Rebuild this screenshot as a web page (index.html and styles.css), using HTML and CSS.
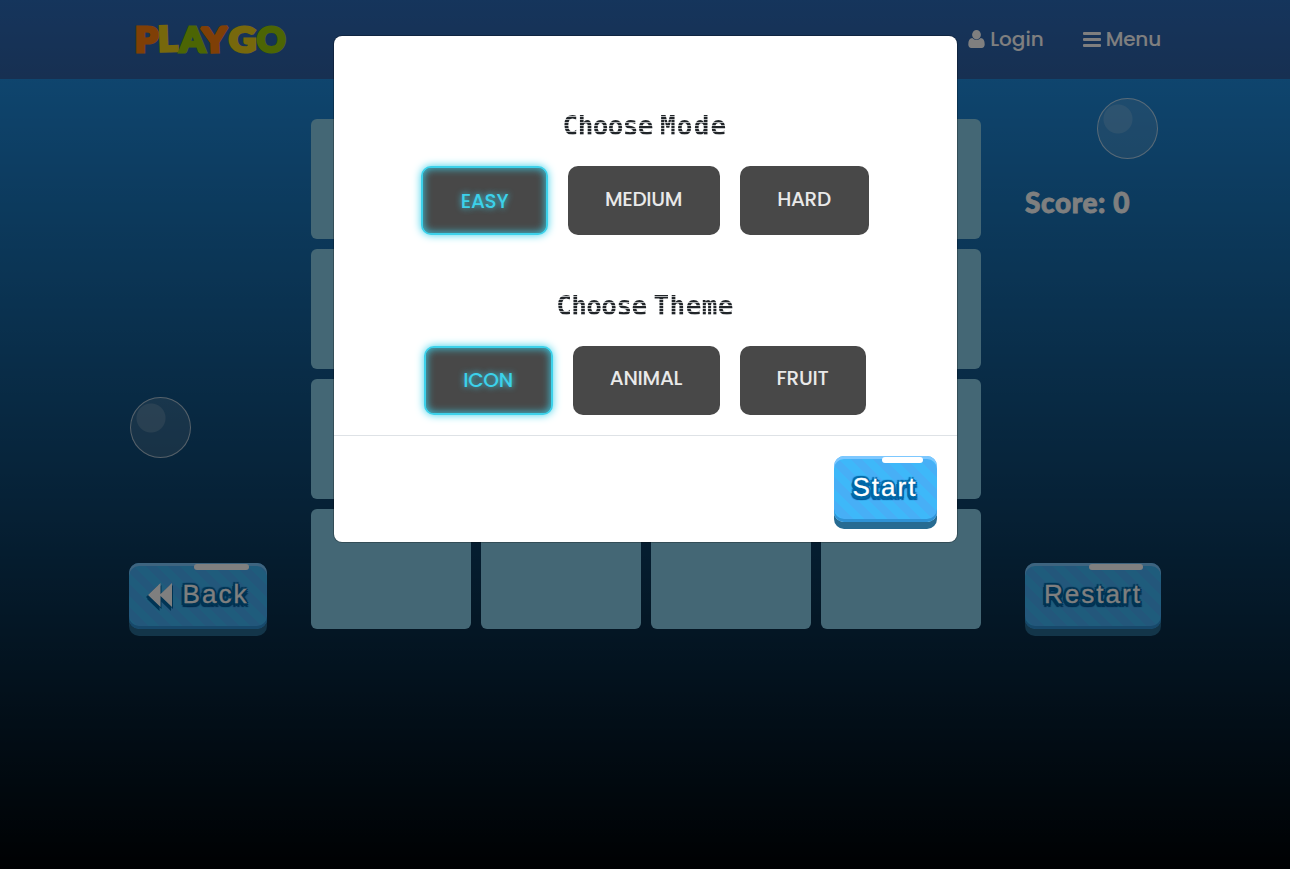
FILE: index.html
```html
<!DOCTYPE html>
<html lang="en">
<head>
<meta charset="utf-8">
<title>PlayGo</title>
<link rel="stylesheet" href="styles.css">
</head>
<body>
<div class="page">
  <header class="header">
    <svg class="logo" width="166" height="66" viewBox="0 -14 166 66" role="img" aria-label="PLAYGO">
      <g class="logo-letters">
        <text class="orange" x="6" y="34" textLength="23" lengthAdjust="spacingAndGlyphs">P</text>
        <text class="yellow" x="29" y="33" textLength="19" lengthAdjust="spacingAndGlyphs" transform="rotate(-2 38 20)">L</text>
        <text class="green" x="51" y="34" textLength="25" lengthAdjust="spacingAndGlyphs">A</text>
        <text class="orange" x="73" y="34" textLength="25" lengthAdjust="spacingAndGlyphs" transform="rotate(-2 85 20)">Y</text>
        <text class="yellow" x="100" y="34" textLength="27" lengthAdjust="spacingAndGlyphs">G</text>
        <text class="green" x="128" y="34" textLength="28.500" lengthAdjust="spacingAndGlyphs">O</text>
      </g>
    </svg>
    <nav class="nav">
      <a class="nav-link login"><svg width="17" height="18" viewBox="0 0 17 18"><ellipse cx="8.5" cy="4.7" rx="4.4" ry="4.7"/><path d="M4.300 8.100C5.400 9.300 6.900 10 8.500 10s3.100-.7 4.200-1.900C15.300 8.300 16.700 10.600 16.700 14.500c0 2-1.200 3.400-3.100 3.400H3.400C1.500 17.900.3 16.500.3 14.500.3 10.600 1.700 8.300 4.300 8.100z"/></svg><span>Login</span></a>
      <a class="nav-link menu"><svg width="18" height="15" viewBox="0 0 18 15"><rect width="18" height="3" rx="1"/><rect y="6" width="18" height="3" rx="1"/><rect y="12" width="18" height="3" rx="1"/></svg><span>Menu</span></a>
    </nav>
  </header>
  <main class="game">
    <aside class="side side-left">
      <button class="btn btn-back"><svg class="rewind" width="25" height="24" viewBox="0 0 25 24"><path d="M0 12 12.500 0V24zM11.500 12 24 0V24z"/></svg><span>Back</span></button>
    </aside>
    <section class="board">
      <div class="card"></div><div class="card"></div><div class="card"></div><div class="card"></div>
      <div class="card"></div><div class="card"></div><div class="card"></div><div class="card"></div>
      <div class="card"></div><div class="card"></div><div class="card"></div><div class="card"></div>
      <div class="card"></div><div class="card"></div><div class="card"></div><div class="card"></div>
    </section>
    <aside class="side side-right">
      <div class="score">Score: 0</div>
      <button class="btn btn-restart"><span>Restart</span></button>
    </aside>
  </main>
  <i class="bubble bubble-left"></i>
  <i class="bubble bubble-right"></i>
</div>
<div class="backdrop">
  <div class="modal" role="dialog">
    <div class="modal-body">
      <h4 class="title">Choose <span class="wide">Mode</span></h4>
      <div class="options">
        <button class="option active easy"><span>EASY</span></button>
        <button class="option medium"><span>MEDIUM</span></button>
        <button class="option hard"><span>HARD</span></button>
      </div>
      <h4 class="title">Choose <span class="wide theme">Theme</span></h4>
      <div class="options themes">
        <button class="option active icon"><span>ICON</span></button>
        <button class="option animal"><span>ANIMAL</span></button>
        <button class="option fruit"><span>FRUIT</span></button>
      </div>
    </div>
    <div class="modal-footer">
      <button class="btn btn-start"><span>Start</span></button>
    </div>
  </div>
</div>
</body>
</html>
```
FILE: styles.css
```css
* { box-sizing: border-box; }
body { margin: 0; overflow: hidden; font-family: Poppins, Inter, sans-serif; }
button { border: 0; padding: 0; font: inherit; }

.page {
  position: relative;
  height: 869px;
  background: linear-gradient(#2298ee 0, #1e8adc 79px, #0c4068 520px, #000306 869px);
}
.header {
  display: flex;
  justify-content: space-between;
  height: 79px;
  padding: 18px 129px 0;
  background: linear-gradient(#2b6ab8, #2e60a4);
}
.logo { display: block; margin-top: -14px; }
.logo-letters { font: 900 34px Lato, sans-serif; stroke-width: 3.2px; stroke-linejoin: miter; stroke-miterlimit: 2; }
.orange { fill: #ff7f0c; stroke: #ff7f0c; }
.yellow { fill: #eed018; stroke: #eed018; }
.green { fill: #98ca08; stroke: #98ca08; }
.nav { display: flex; gap: 39px; color: #fff; font-size: 20px; font-weight: 500; line-height: 42px; }
.nav-link { display: flex; align-items: center; gap: 5px; height: 42px; }
.nav-link svg { fill: currentColor; }
.menu { letter-spacing: -.15px; }

.game { display: flex; justify-content: space-between; padding: 40px 129px 0; }
.side { display: flex; flex-direction: column; justify-content: flex-end; width: 138px; height: 517px; }
.side-right { width: 136px; justify-content: space-between; padding-top: 65px; }
.board { display: grid; grid-template: repeat(4, 120px) / repeat(4, 160px); gap: 10px; }
.card { border-radius: 6px; background: #88ceea; }
.score { color: #fff; font: 900 28px/36px Lato, sans-serif; letter-spacing: .6px; white-space: nowrap; -webkit-text-stroke: .8px #fff; }

.bubble {
  position: absolute;
  width: 61px;
  height: 61px;
  border: 1px solid rgba(255, 255, 255, .6);
  border-radius: 50%;
  background: radial-gradient(circle at 20px 20px, rgba(255, 255, 255, .16) 14px, transparent 15px), rgba(255, 255, 255, .14);
}
.bubble-left { left: 130px; top: 397px; }
.bubble-right { left: 1097px; top: 98px; }

.btn {
  position: relative;
  display: flex;
  align-items: center;
  justify-content: center;
  height: 66px;
  margin-bottom: 7px;
  padding: 0 0 3px;
  border-radius: 10px;
  color: #fff;
  font: 26px "Liberation Sans", Arial, sans-serif;
  letter-spacing: 2px;
  -webkit-text-stroke: .3px #fff;
  background: repeating-linear-gradient(45deg, #3eb8f9 0 8px, #47aff6 8px 16px);
  box-shadow: inset 0 3px #7dc8ff, inset 0 -3px #2f93d6, 0 7px #276b92;
  text-shadow: -2px -2px 1px #0068a8, 1px -2px 1px #0068a8, -2px 0 #0068a8, 2px 0 #0068a8, -3px 2px #0068a8, 2px 2px #0068a8, 0 3px #0068a8, -2px 4px 1px #00589b, 2px 4px 1px #00589b;
}
.btn::before {
  content: "";
  position: absolute;
  top: 1px;
  right: 14px;
  width: 40%;
  height: 6px;
  border-radius: 3px;
  background: #fff;
}
.btn-back::before, .btn-restart::before { right: 18px; }
.btn-start { width: 103px; padding-right: 1px; }
.rewind { margin-right: 10px; fill: #fff; filter: drop-shadow(-2px 2px #0068a8) drop-shadow(1px 2px #0068a8); overflow: visible; }

.backdrop {
  position: absolute;
  inset: 0;
  padding-top: 36px;
  background: rgba(0, 0, 0, .5);
}
.modal {
  width: 623px;
  height: 506px;
  margin-left: 334px;
  border-radius: 8px;
  background: #fff;
  box-shadow: 0 0 0 1px rgba(0, 0, 0, .25);
}
.modal-body { height: 400px; padding: 75px 2px 0 0; border-bottom: 1px solid #dee2e6; }
.title {
  width: max-content;
  height: 30px;
  margin: 0 auto 25px;
  padding-left: 1px;
  font: bold 26px/30px "DejaVu Sans Mono", monospace;
  letter-spacing: -.6px;
  word-spacing: -8px;
  color: transparent;
  background: repeating-linear-gradient(#212529 0 2px, #b5b7b9 2px 3px);
  -webkit-background-clip: text;
  background-clip: text;
}
.wide { letter-spacing: 1.200px; }
.theme { letter-spacing: .4px; }
.options { display: flex; justify-content: center; gap: 20px; }
.options + .title { margin-top: 56px; margin-bottom: 25px; }
.option {
  height: 69px;
  border-radius: 10px;
  padding: 0 0 3px;
  background: #484848;
  color: #e9e9e9;
  font-size: 20px;
  font-weight: 500;
  letter-spacing: -.3px;
}
.themes .option { padding-bottom: 5px; }
.option.active {
  padding: 0 0 0 1px;
  border: 2px solid #3cd1ea;
  color: #3cd1ea;
  text-shadow: 0 0 6px #3cd1ea;
  box-shadow: 0 0 8px #3cd1ea, inset 0 0 8px #3cd1ea;
}
.themes .option.active { padding: 0 0 2px; }
.easy { width: 127px; }
.medium { width: 152px; }
.hard { width: 129px; }
.icon { width: 129px; }
.animal { width: 147px; }
.fruit { width: 126px; }
.modal-footer { display: flex; justify-content: flex-end; padding: 20px; }
```
